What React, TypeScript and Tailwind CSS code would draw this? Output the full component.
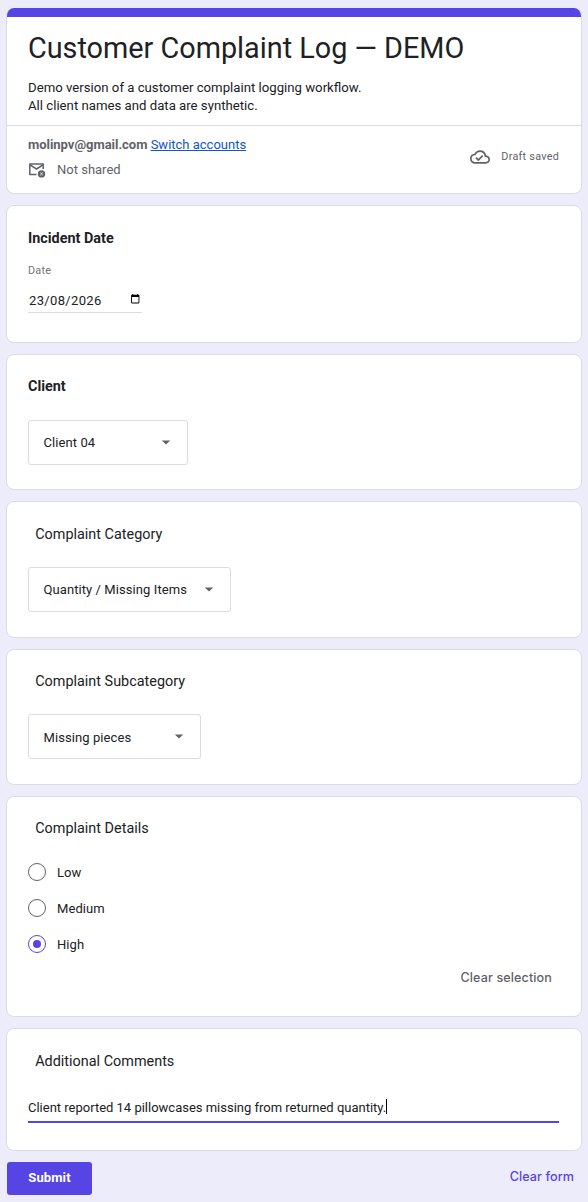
import { useState } from 'react';
import type { ReactNode } from 'react';
import { MdOutlineCloudDone } from 'react-icons/md';

const severities = ['Low', 'Medium', 'High'];

const Card = ({ className, children }: { className: string; children: ReactNode }) => (
  <section className={`rounded-lg border border-[#dadce0] bg-white pr-[22px] pl-[21px] ${className}`}>{children}</section>
);

const Title = ({ bold, children }: { bold?: boolean; children: ReactNode }) => (
  <h2
    className={
      bold
        ? 'text-[14.4px] leading-[22px] font-bold'
        : 'pl-[7.2px] text-[14.4px] leading-[22px] tracking-[0.01px]'
    }
  >
    {children}
  </h2>
);

const Select = ({ value, className }: { value: string; className: string }) => (
  <button
    type="button"
    className={`flex h-[45px] items-center justify-between rounded-[3px] border border-[#dadce0] pr-4 pl-[14.5px] text-[13px] tracking-[0.08px] ${className}`}
  >
    <span>{value}</span>
    <svg width="10" height="5" viewBox="0 0 10 5" className="fill-[#5f6368]">
      <path d="M0.8 0.4h8.4L5 4.6z" />
    </svg>
  </button>
);

const NotSharedIcon = () => (
  <svg width="18" height="18" viewBox="0 0 18 18" fill="none" className="text-[#5f6368]">
    <path d="M8.5 13.4H1.8V3h13.4v5" stroke="currentColor" strokeWidth="1.5" strokeLinejoin="round" />
    <path d="M2 3.8l6.5 4.2L15 3.8" stroke="currentColor" strokeWidth="1.5" />
    <circle cx="13.5" cy="12.9" r="3.7" fill="currentColor" />
    <path d="M12.2 11.6l2.6 2.6M14.8 11.6l-2.6 2.6" stroke="#fff" strokeWidth="0.8" />
  </svg>
);

const CalendarIcon = () => (
  <svg width="10" height="10" viewBox="0 0 10 10" className="mt-[2px] fill-black">
    <path
      fillRule="evenodd"
      d="M1.9 0.8h0.4V0h1v0.8h3.900V0h1v0.800h0.400a0.800 0.800 0 0 1 0.800 0.800v7a0.800 0.800 0 0 1-0.800 0.800H1.900a0.800 0.800 0 0 1-0.800-0.800V1.600a0.800 0.800 0 0 1 0.800-0.800zM2 3v5.500h6.500V3z"
    />
  </svg>
);

const App = () => {
  const [severity, setSeverity] = useState('High');

  return (
    <main className="h-[1202px] bg-[#edecfb] pt-2 pr-[6px] pl-[6px] font-['Roboto','Liberation_Sans',sans-serif] text-[#202124]">
      <div className="flex flex-col gap-[11px]">
        <header className="h-[186px] overflow-hidden rounded-lg border border-t-0 border-[#dadce0] bg-white">
          <div className="-mx-px h-[9px] bg-[#5645e4]" />
          <div className="h-[109px] border-b border-[#dadce0] px-[21px] pt-[13px]">
            <h1 className="text-[28.8px] leading-[36px]">Customer Complaint Log — DEMO</h1>
            <p className="mt-[13px] text-[13.2px] leading-[18px]">
              Demo version of a customer complaint logging workflow.
              <br />
              All client names and data are synthetic.
            </p>
          </div>
          <div className="flex justify-between pt-[9px] pr-[22px] pl-[21px] text-[13px] leading-[20px] text-[#5f6368]">
            <div>
              <p>
                <span className="font-bold tracking-[-0.03px]">molinpv@gmail.com</span>{' '}
                <a href="#" className="text-[#1155cc] underline">
                  Switch accounts
                </a>
              </p>
              <p className="mt-[5px] flex items-center gap-[11px]">
                <NotSharedIcon />
                Not shared
              </p>
            </div>
            <div className="mt-3 flex h-5 items-center gap-[11px] text-[10.8px] tracking-[0.27px]">
              <MdOutlineCloudDone size={20} />
              Draft saved
            </div>
          </div>
        </header>

        <Card className="h-[138px] pt-[22px]">
          <Title bold>Incident Date</Title>
          <div className="mt-[13px] text-[10.8px] leading-4 tracking-[0.27px] text-[#70757a]">Date</div>
          <div className="mt-[13px] flex h-[21px] w-[114px] justify-between border-b border-[#dadce0] pr-0.5 pl-px text-[13px] leading-[18px]">
            <span className="tracking-[0.35px]">23/08/2026</span>
            <CalendarIcon />
          </div>
        </Card>

        <Card className="h-[136px] pt-[21px]">
          <Title bold>Client</Title>
          <div className="mt-[22px]">
            <Select value="Client 04" className="w-[160px]" />
          </div>
        </Card>

        <Card className="h-[137px] pt-[22px]">
          <Title>Complaint Category</Title>
          <div className="mt-[21px]">
            <Select value="Quantity / Missing Items" className="w-[203px]" />
          </div>
        </Card>

        <Card className="h-[136px] pt-[21px]">
          <Title>Complaint Subcategory</Title>
          <div className="mt-[21px]">
            <Select value="Missing pieces" className="w-[173px] [&>span]:pt-0.5" />
          </div>
        </Card>

        <Card className="h-[221px] pt-[21px]">
          <Title>Complaint Details</Title>
          <div className="mt-[23px] flex flex-col gap-[18px]">
            {severities.map((level) => (
              <label key={level} className="flex h-[18px] items-center gap-[11px] text-[13px] tracking-[0.08px]">
                <input
                  type="radio"
                  name="severity"
                  className="sr-only"
                  checked={severity === level}
                  onChange={() => setSeverity(level)}
                />
                <span
                  className={
                    severity === level
                      ? 'flex size-[18px] items-center justify-center rounded-full border-[1.5px] border-[#5645e4]'
                      : 'size-[18px] rounded-full border border-[#5f6368]'
                  }
                >
                  {severity === level && <span className="size-2 rounded-full bg-[#5645e4]" />}
                </span>
                <span className="pt-0.5">{level}</span>
              </label>
            ))}
          </div>
          <div className="mt-4 flex justify-end pr-[7px]">
            <button
              type="button"
              className="font-['Inter',sans-serif] text-[12.6px] leading-[18px] font-medium tracking-[0.1px] text-[#5f6368]"
              onClick={() => setSeverity('')}
            >
              Clear selection
            </button>
          </div>
        </Card>

        <Card className="h-[123px] pt-[22px]">
          <Title>Additional Comments</Title>
          <div className="mt-[26px] flex h-6 items-start border-b-2 border-[#5645e4] text-[13px] leading-[18px]">
            <span className="tracking-[-0.005px]">Client reported 14 pillowcases missing from returned quantity.</span>
            <span className="h-[15px] w-px bg-black" />
          </div>
        </Card>
      </div>

      <footer className="mt-[11px] flex items-center justify-between pr-px pl-px font-['Inter',sans-serif] text-[12.6px] font-medium">
        <button
          type="button"
          className="h-[33px] w-[85px] rounded-[3px] bg-[#5645e4] pb-0.5 font-['Roboto',sans-serif] text-[13px] font-bold tracking-[0.1px] text-white"
        >
          Submit
        </button>
        <button type="button" className="pr-[7px] pb-0.5 tracking-[0.07px] text-[#5645e4]">
          Clear form
        </button>
      </footer>
    </main>
  );
};

export default App;
